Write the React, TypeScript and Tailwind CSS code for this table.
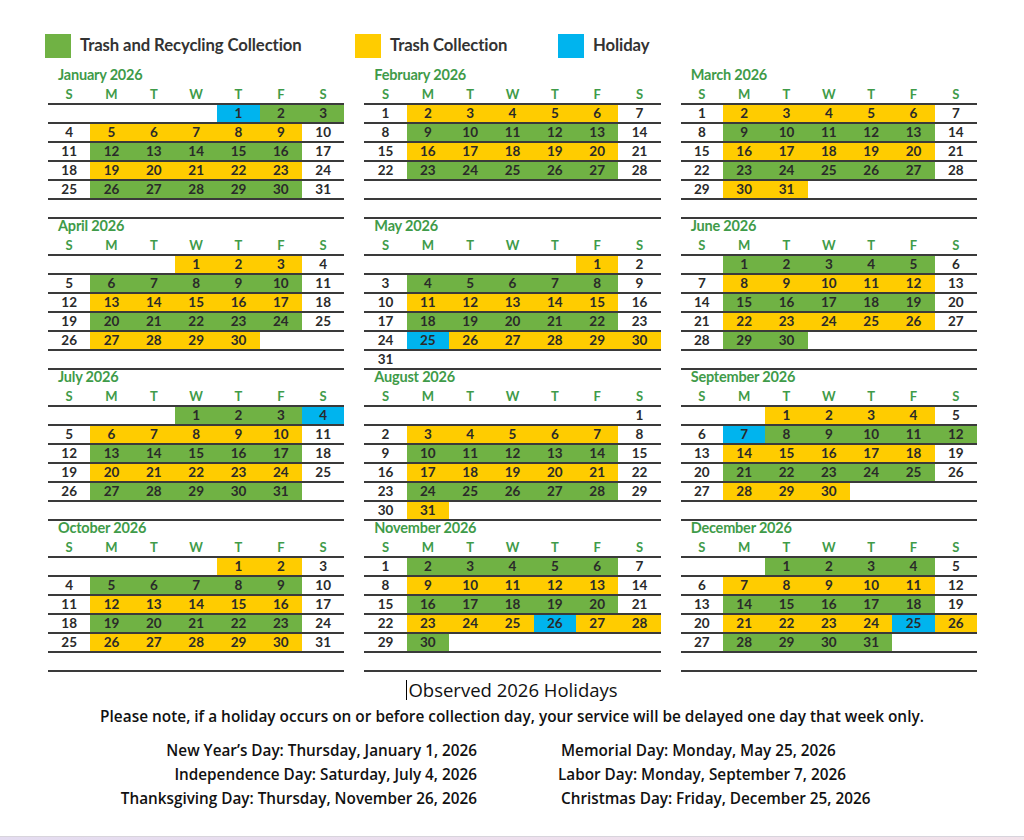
import React from "react";

type C = "g" | "y" | "b" | "";

interface Month {
  name: string;
  start: number;
  days: number;
  colors: Record<number, C>;
}

function range(a: number, b: number, c: C, out: Record<number, C>) {
  for (let i = a; i <= b; i++) out[i] = c;
}

function mk(name: string, start: number, days: number, spec: [number, number, C][]): Month {
  const colors: Record<number, C> = {};
  spec.forEach(([a, b, c]) => range(a, b, c, colors));
  return { name, start, days, colors };
}

const months: Month[] = [
  mk("January 2026", 4, 31, [[1, 1, "b"], [2, 3, "g"], [5, 9, "y"], [12, 16, "g"], [19, 23, "y"], [26, 30, "g"]]),
  mk("February 2026", 0, 28, [[2, 6, "y"], [9, 13, "g"], [16, 20, "y"], [23, 27, "g"]]),
  mk("March 2026", 0, 31, [[2, 6, "y"], [9, 13, "g"], [16, 20, "y"], [23, 27, "g"], [30, 31, "y"]]),
  mk("April 2026", 3, 30, [[1, 3, "y"], [6, 10, "g"], [13, 17, "y"], [20, 24, "g"], [27, 30, "y"]]),
  mk("May 2026", 5, 31, [[1, 1, "y"], [4, 8, "g"], [11, 15, "y"], [18, 22, "g"], [25, 25, "b"], [26, 30, "y"]]),
  mk("June 2026", 1, 30, [[1, 5, "g"], [8, 12, "y"], [15, 19, "g"], [22, 26, "y"], [29, 30, "g"]]),
  mk("July 2026", 3, 31, [[1, 3, "g"], [4, 4, "b"], [6, 10, "y"], [13, 17, "g"], [20, 24, "y"], [27, 31, "g"]]),
  mk("August 2026", 6, 31, [[3, 7, "y"], [10, 14, "g"], [17, 21, "y"], [24, 28, "g"], [31, 31, "y"]]),
  mk("September 2026", 2, 30, [[1, 4, "y"], [7, 7, "b"], [8, 12, "g"], [14, 18, "y"], [21, 25, "g"], [28, 30, "y"]]),
  mk("October 2026", 4, 31, [[1, 2, "y"], [5, 9, "g"], [12, 16, "y"], [19, 23, "g"], [26, 30, "y"]]),
  mk("November 2026", 0, 30, [[2, 6, "g"], [9, 13, "y"], [16, 20, "g"], [23, 25, "y"], [26, 26, "b"], [27, 28, "y"], [30, 30, "g"]]),
  mk("December 2026", 2, 31, [[1, 4, "g"], [7, 11, "y"], [14, 18, "g"], [21, 24, "y"], [25, 25, "b"], [26, 26, "y"], [28, 31, "g"]]),
];

const bgClass: Record<string, string> = {
  g: "bg-[#70b244]",
  y: "bg-[#ffcc00]",
  b: "bg-[#00b4ee]",
  "": "bg-white",
};

const headers = ["S", "M", "T", "W", "T", "F", "S"];

function MonthBlock({ m }: { m: Month }) {
  const cells: (number | null)[] = [];
  for (let i = 0; i < m.start; i++) cells.push(null);
  for (let d = 1; d <= m.days; d++) cells.push(d);
  while (cells.length < 42) cells.push(null);
  const rows: (number | null)[][] = [];
  for (let r = 0; r < 6; r++) rows.push(cells.slice(r * 7, r * 7 + 7));
  return (
    <div>
      <div className="h-[18px] pl-[10px] text-[14.5px] leading-[14px] font-bold text-[#3f9b49] tracking-[-0.2px]">
        {m.name}
      </div>
      <div className="grid grid-cols-7 h-[17px] items-center text-[13px] font-bold text-[#3f9b49] leading-none">
        {headers.map((h, i) => (
          <div key={i} className="text-center">
            {h}
          </div>
        ))}
      </div>
      <div className="border-t-2 border-[#3a3a3a]">
        {rows.map((row, r) => (
          <div key={r} className="grid grid-cols-7 h-[19px] border-b-2 border-[#3a3a3a]">
            {row.map((d, i) => {
              const c: C = d ? m.colors[d] || "" : "";
              return (
                <div
                  key={i}
                  className={`${bgClass[c]} flex items-center justify-center text-[13.5px] font-bold text-[#2a2a2a] leading-none`}
                >
                  {d ?? ""}
                </div>
              );
            })}
          </div>
        ))}
      </div>
    </div>
  );
}

function Legend({ color, label, width }: { color: string; label: string; width: string }) {
  return (
    <div className={`flex items-center ${width}`}>
      <div className={`w-[26px] h-[24px] ${color}`} />
      <div className="ml-[9px] text-[16.7px] font-bold text-[#333333] tracking-[-0.1px]">{label}</div>
    </div>
  );
}

export default function App() {
  return (
    <div className="w-[1024px] h-[840px] bg-white flex flex-col overflow-hidden font-['Lato',sans-serif]">
      <div className="flex-1">
        <div className="flex pt-[33px] pl-[45px]">
          <Legend color="bg-[#70b244]" label="Trash and Recycling Collection" width="w-[310px]" />
          <Legend color="bg-[#ffcc00]" label="Trash Collection" width="w-[203px]" />
          <Legend color="bg-[#00b4ee]" label="Holiday" width="w-[200px]" />
        </div>
        <div className="grid grid-cols-3 gap-x-[20px] ml-[48px] w-[929px] mt-[10px]">
          {months.map((m) => (
            <MonthBlock key={m.name} m={m} />
          ))}
        </div>
        <div className="font-['Open_Sans',sans-serif] text-[#111]">
          <div className="mt-[7px] h-[22px] flex justify-center items-center">
            <span className="w-px h-[20px] bg-black mr-[1px]" />
            <span className="text-[18.5px] leading-[22px]">Observed 2026 Holidays</span>
          </div>
          <div className="mt-[5px] h-[22px] leading-[22px] text-center text-[15.4px] font-semibold">
            Please note, if a holiday occurs on or before collection day, your service will be delayed one day that week only.
          </div>
          <div className="mt-[10px] flex text-[15.3px] font-semibold">
            <div className="w-[477px] text-right">
              <div className="h-[24px] leading-[24px]">New Year’s Day: Thursday, January 1, 2026</div>
              <div className="h-[24px] leading-[24px]">Independence Day: Saturday, July 4, 2026</div>
              <div className="h-[24px] leading-[24px]">Thanksgiving Day: Thursday, November 26, 2026</div>
            </div>
            <div className="pl-[84px]">
              <div className="h-[24px] leading-[24px]">Memorial Day: Monday, May 25, 2026</div>
              <div className="h-[24px] leading-[24px] -ml-[3px]">Labor Day: Monday, September 7, 2026</div>
              <div className="h-[24px] leading-[24px]">Christmas Day: Friday, December 25, 2026</div>
            </div>
          </div>
        </div>
      </div>
      <div className="h-px bg-[#d8d4dc]" />
      <div className="h-[3px] bg-gradient-to-r from-[#e4dcf0] via-[#eee0ee] to-[#f2e2ea]" />
    </div>
  );
}
